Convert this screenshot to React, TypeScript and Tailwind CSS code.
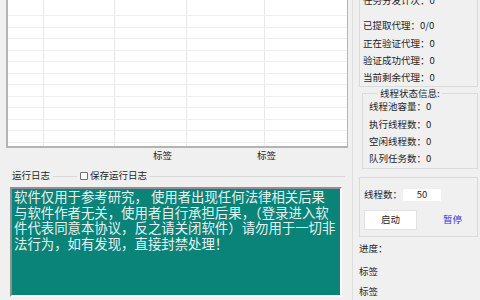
import React from 'react';

const colWidths = [36, 71, 72, 78];
const rowCount = 11;

const logLines = [
    '软件仅用于参考研究， 使用者出现任何法律相关后果',
    '与软件作者无关，使用者自行承担后果，（登录进入软',
    '件代表同意本协议，反之请关闭软件）请勿用于一切非',
    '法行为，如有发现，直接封禁处理！',
];

const Row: React.FC<{ h: string; last?: boolean }> = ({ h, last }) => (
    <div className={`flex ${h} ${last ? '' : 'border-b border-[#efefef]'}`}>
        {colWidths.map((w, i) => (
            <div key={i} className="h-full border-r border-[#e9e9e9]" style={{ width: w }} />
        ))}
        <div className="flex-1" />
    </div>
);

export default function App() {
    return (
        <div
            className="w-[480px] h-[300px] overflow-hidden flex bg-[#f0f0f0] text-[#1e1e1e] text-[9.5px] leading-[17.3px]"
            style={{ fontFamily: '"Noto Sans CJK SC", "Noto Sans", sans-serif' }}
        >
            {/* left side */}
            <div className="w-[352px] shrink-0 flex flex-col">
                {/* data grid */}
                <div className="ml-[6px] w-[342px] h-[148px] bg-white border-l-2 border-b-2 border-r border-[#b4b4b4] flex flex-col">
                    <Row h="h-[16px]" />
                    {Array.from({ length: rowCount }).map((_, i) => (
                        <Row key={i} h="h-[11.5px]" />
                    ))}
                    <div className="flex-1 flex flex-col">
                        <Row h="flex-1" last />
                    </div>
                </div>

                {/* labels under grid */}
                <div className="flex h-[16px] items-center pl-[153px]">
                    <span className="w-[104px]">标签</span>
                    <span>标签</span>
                </div>

                {/* log group header */}
                <div className="mt-[5px] h-[14px] flex items-center pl-[12px] pr-[7px]">
                    <span>运行日志</span>
                    <div className="ml-[3px] w-[24px] h-px bg-[#d8d8d8]" />
                    <div className="ml-[3px] w-[8px] h-[8px] bg-white border border-[#6f6f6f] rounded-[1px]" />
                    <span className="ml-[2px]">保存运行日志</span>
                    <div className="ml-[2px] flex-1 h-px bg-[#d8d8d8]" />
                </div>

                {/* log text */}
                <div className="mt-[4px] ml-[10px] w-[332px] h-[110px] border-l-2 border-t-2 border-[#8f8f8f] border-r-2 border-b-2 border-r-white border-b-white">
                    <div className="h-full overflow-hidden bg-[#0a8379] pl-[2px] text-[13.4px] leading-[15.7px] text-[#e4f3f1] whitespace-nowrap">
                        {logLines.map((l, i) => (
                            <div key={i}>{l}</div>
                        ))}
                    </div>
                </div>
            </div>

            {/* right side */}
            <div className="flex-1 flex flex-col border-l border-[#dedede]">
                {/* proxy stats */}
                <div className="ml-[6px] mr-[2px] h-[89px] border-l border-r border-b border-[#dadada] pl-[3px]">
                    <div className="-mt-[8px]">任务分发计次：0</div>
                    <div className="mt-[8px]">已提取代理：0/0</div>
                    <div>正在验证代理：0</div>
                    <div>验证成功代理：0</div>
                    <div>当前剩余代理：0</div>
                </div>

                {/* thread status */}
                <div className="relative mt-[6px] ml-[9px] mr-[2px] h-[78px] border border-[#dadada] pl-[6px] pt-[4px]">
                    <span className="absolute -top-[7px] left-[15px] px-[2px] leading-[12px] bg-[#f0f0f0]">线程状态信息:</span>
                    <div>线程池容量：0</div>
                    <div>执行线程数：0</div>
                    <div>空闲线程数：0</div>
                    <div>队列任务数：0</div>
                </div>

                {/* controls */}
                <div className="mt-[8px] ml-[6px] mr-[2px] h-[62px] border border-[#dadada] pl-[4px] pt-[11px]">
                    <div className="flex items-center h-[12px]">
                        <span className="whitespace-nowrap">线程数：</span>
                        <div className="ml-[1px] w-[38px] h-[12px] bg-white flex items-center justify-center leading-none">50</div>
                    </div>
                    <div className="mt-[9px] flex items-center">
                        <div className="w-[53px] h-[20px] bg-white border border-[#e2e2e2] flex items-center justify-center">启动</div>
                        <span className="ml-[26px] text-[#3535d8]">暂停</span>
                    </div>
                </div>

                <div className="ml-[6px] mt-[3px]">进度：</div>
                <div className="ml-[6px] mt-[6px]">标签</div>
                <div className="ml-[6px] mt-[2px]">标签</div>
            </div>
        </div>
    );
}
